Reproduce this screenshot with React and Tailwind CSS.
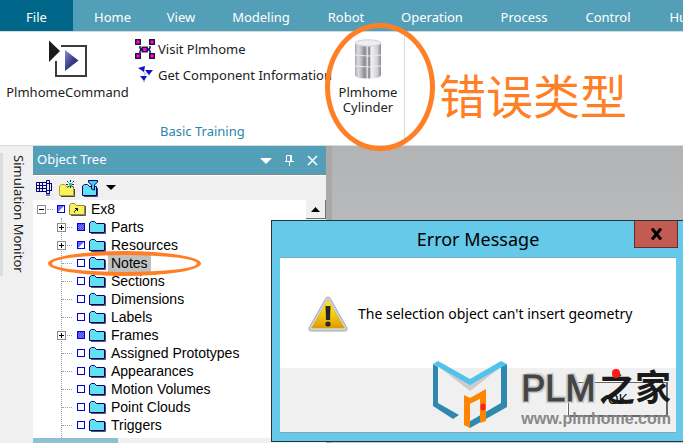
import React from 'react';

const tabs = [
  { name: 'Home', width: 'w-[79px]' },
  { name: 'View', width: 'w-[58px]' },
  { name: 'Modeling', width: 'w-[102px]' },
  { name: 'Robot', width: 'w-[68px]' },
  { name: 'Operation', width: 'w-[104px]' },
  { name: 'Process', width: 'w-[80px]' },
  { name: 'Control', width: 'w-[88px]' },
  { name: 'Human', width: 'w-[80px]' },
];

const nodes = [
  { name: 'Parts', expandable: true, state: 'full' },
  { name: 'Resources', expandable: true, state: 'partial' },
  { name: 'Notes', selected: true },
  { name: 'Sections' },
  { name: 'Dimensions' },
  { name: 'Labels' },
  { name: 'Frames', expandable: true, state: 'full' },
  { name: 'Assigned Prototypes' },
  { name: 'Appearances' },
  { name: 'Motion Volumes' },
  { name: 'Point Clouds' },
  { name: 'Triggers' },
];

const CommandIcon = () => (
  <svg width="40" height="38" viewBox="0 0 40 38" className="shrink-0">
    <defs>
      <linearGradient id="cmd" x1="0" y1="0" x2="1" y2="1">
        <stop offset="0" stopColor="#8d90c8" />
        <stop offset="0.5" stopColor="#3c3f8c" />
        <stop offset="1" stopColor="#14165f" />
      </linearGradient>
    </defs>
    <path d="M13 6H38V36H8V21" fill="none" stroke="#3c3c3c" strokeWidth="2" />
    <path d="M1 0.500L12 11L1 22Z" fill="#1c1a1a" />
    <path d="M17 10L30.500 20.500L17 31Z" fill="url(#cmd)" />
  </svg>
);

const NetworkIcon = () => (
  <svg width="20" height="20" viewBox="0 0 20 20" className="shrink-0">
    <path d="M5 7V9L7 10.500L5 12V14M15 7V9L13 10.500L15 12V14M5 10.500H15" fill="none" stroke="#10107c" strokeWidth="1.500" />
    <g fill="#f0f" stroke="#111" strokeWidth="1.300">
      <rect x="0.700" y="0.700" width="4.600" height="4.600" />
      <rect x="14.700" y="0.700" width="4.600" height="4.600" />
      <rect x="7.200" y="8.200" width="5" height="4.600" />
      <rect x="0.700" y="14.700" width="4.600" height="4.600" />
      <rect x="14.700" y="14.700" width="4.600" height="4.600" />
    </g>
  </svg>
);

const ComponentIcon = () => (
  <svg width="20" height="20" viewBox="0 0 20 20" className="shrink-0">
    <path d="M8 5L10 9L9 18M10 9L15 6L14 11" fill="none" stroke="#b9bccb" />
    <path d="M3 3L10 1L9 7Z" fill="#1212c8" />
    <path d="M10 5L18 5L14 10Z" fill="#1212c8" />
    <path d="M5 11L12 11L9 16Z" fill="#1212c8" />
  </svg>
);

const CylinderIcon = () => (
  <svg width="28" height="40" viewBox="0 0 28 40" className="shrink-0">
    <defs>
      <linearGradient id="cyl" x1="0" y1="0" x2="1" y2="0">
        <stop offset="0" stopColor="#a4a4ac" />
        <stop offset="0.120" stopColor="#dcdce2" />
        <stop offset="0.250" stopColor="#b9b9c2" />
        <stop offset="0.380" stopColor="#85858d" />
        <stop offset="0.480" stopColor="#dcdce0" />
        <stop offset="0.540" stopColor="#77777e" />
        <stop offset="0.620" stopColor="#f3f3f6" />
        <stop offset="0.850" stopColor="#d2d2d8" />
        <stop offset="1" stopColor="#8a8a92" />
      </linearGradient>
    </defs>
    <path d="M1 4V36Q1 39.500 14 39.500Q27 39.500 27 36V4Z" fill="url(#cyl)" />
    <path d="M1 16Q14 18 27 16M1 27Q14 29 27 27" fill="none" stroke="#ececf0" />
    <ellipse cx="14" cy="4" rx="13" ry="3.200" fill="#eeeff2" stroke="#d0d0d4" />
  </svg>
);

const FolderIcon = () => (
  <svg width="17" height="14" viewBox="0 0 17 14" className="shrink-0">
    <path d="M16.500 4V13.500H2" fill="none" stroke="#555" />
    <path d="M0.500 12.500V3L2.500 1.500H5.500L7.500 3.500H15.500V12.500Z" fill="#62e0f2" stroke="#00007c" />
  </svg>
);

const RootFolderIcon = () => (
  <svg width="17" height="14" viewBox="0 0 17 14" className="shrink-0">
    <path d="M16.500 4V13.500H2" fill="none" stroke="#555" />
    <path d="M0.500 12.500V3L2.500 1.500H5.500L7.500 3.500H15.500V12.500Z" fill="#f8f35c" stroke="#8f8b34" />
    <path d="M5.500 10.500V9.500L8 7M6 6.500H8.500V9" fill="none" stroke="#000" />
  </svg>
);

const StateIcon = ({ state }) => (
  <svg width="8" height="8" viewBox="0 0 8 8" className="shrink-0">
    <rect x="0.500" y="0.500" width="7" height="7" fill={state === 'full' ? '#7777ef' : '#fff'} stroke="#0000ec" />
    {state === 'partial' && <path d="M1 1H7L1 7Z" fill="#6464ec" />}
    {state === 'full' && <path d="M1 1L7 7M3 1L7 5M1 3L5 7M5 1L7 3M1 5L3 7" stroke="#1c1cd8" strokeDasharray="1 1" />}
  </svg>
);

const Expander = ({ open }) => (
  <svg width="9" height="9" viewBox="0 0 9 9" className="shrink-0">
    <rect x="0.500" y="0.500" width="8" height="8" fill="#fff" stroke="#8c8c8c" />
    <path d={open ? 'M2 4.500H7' : 'M2 4.500H7M4.500 2V7'} stroke="#000" />
  </svg>
);

const TableIcon = () => (
  <svg width="17" height="16" viewBox="0 0 17 16">
    <path d="M0.500 2.500H10.500V11.500H0.500ZM0.500 5.500H10.500M0.500 8.500H10.500M3.500 2.500V11.500M6.500 2.500V11.500M10.500 0.500H13.500V13.500H10.500ZM10.500 3.500H16M10.500 10.500H16M15.500 3V11" fill="none" stroke="#00007c" />
    <path d="M11 14V16M13 14V16" stroke="#00007c" />
  </svg>
);

const NewFolderIcon = () => (
  <svg width="17" height="17" viewBox="0 0 17 17">
    <path d="M15.500 9V16.500H2" fill="none" stroke="#444" />
    <path d="M0.500 15.500V6L2.500 4.500H5.500L7.500 6.500H14.500V15.500Z" fill="#f8f35c" stroke="#a9a23b" />
    <path d="M11.500 0V9M7 4.500H16M8 1L15 8M15 1L8 8" stroke="#222" strokeDasharray="2 1" />
    <rect x="10" y="3" width="3" height="3" fill="#0cc" />
  </svg>
);

const FilterFolderIcon = () => (
  <svg width="18" height="17" viewBox="0 0 18 17">
    <path d="M15.500 8V16.500H2" fill="none" stroke="#444" />
    <path d="M0.500 15.500V6L2.500 4.500H5.500L7.500 6.500H14.500V15.500Z" fill="#62e0f2" stroke="#00007c" />
    <path d="M6.500 0.500H15.500V2L12.500 5V10L9.500 9V5L6.500 2Z" fill="#42cdec" stroke="#00007c" />
  </svg>
);

const WarningIcon = () => (
  <svg width="40" height="36" viewBox="0 0 40 36" className="shrink-0">
    <defs>
      <linearGradient id="warn" x1="0" y1="0" x2="0" y2="1">
        <stop offset="0" stopColor="#fff200" />
        <stop offset="0.500" stopColor="#f5cf12" />
        <stop offset="1" stopColor="#dc9a05" />
      </linearGradient>
    </defs>
    <path d="M20 1Q21.500 1 22.500 3L39 32Q39.500 35 37 35H3Q0.500 35 1 32L17.500 3Q18.500 1 20 1Z" fill="#d4d5d9" stroke="#a5a6ab" />
    <path d="M20 4L36.500 32H3.500Z" fill="url(#warn)" stroke="#d6a40a" strokeWidth="0.500" />
    <path d="M17.500 10H22.500L22 24H18Z" fill="#25272d" />
    <circle cx="20" cy="28" r="2.600" fill="#25272d" />
  </svg>
);

const LogoMark = () => (
  <svg width="76" height="68" viewBox="0 0 76 68" className="shrink-0">
    <path d="M7 6L38 23L69 6L38 30Z" fill="#ccc" />
    <path d="M1 3L6 6V42L27 54L21 58L1 45Z" fill="#2f88ae" />
    <path d="M75 3L69 6V42L38 60V67L75 46Z" fill="#2f88ae" />
    <path d="M1 3L6 0L38 18L69 0L75 3L38 24Z" fill="#51c2ec" />
    <path fillRule="evenodd" d="M32 34L38 37L54 28V60L48 62V38L38 43V67L32 64Z" fill="#ff8500" />
    <path d="M38 43L48 38V54L38 60Z" fill="#efefef" />
    <ellipse cx="51" cy="46" rx="2.500" ry="3.500" fill="#f5202d" />
  </svg>
);

function Ribbon() {
  return (
    <section className="flex h-[115px] shrink-0 border-y border-[#d8dbdc] bg-white text-[13px] leading-[15px]">
      <button className="flex w-[135px] flex-col items-center justify-start pt-2">
        <CommandIcon />
        <span className="mt-[7px] block">PlmhomeCommand</span>
      </button>
      <div className="flex w-[197px] flex-col whitespace-nowrap">
        <button className="mt-[7px] flex items-center gap-[3px]"><NetworkIcon />Visit Plmhome</button>
        <button className="mt-[6px] flex items-center gap-[3px]"><ComponentIcon />Get Component Information</button>
        <h2 className="mt-auto mb-[6px] pl-[25px] text-[#2c85a8]">Basic Training</h2>
      </div>
      <button className="flex w-[73px] flex-col items-center justify-start border-r border-[#d8dbdc] pt-[7px]">
        <CylinderIcon />
        <span className="mt-[6px] block">Plmhome<br />Cylinder</span>
      </button>
      <p className="pt-[33px] pl-[34px] font-['Noto_Sans_CJK_SC',sans-serif] text-[47px] leading-[58px] text-[#ff7f27]">错误类型</p>
    </section>
  );
}

function ObjectTree() {
  return (
    <section className="flex w-[293px] shrink-0 flex-col bg-[#f0f0f0]">
      <header className="flex h-[29px] shrink-0 items-center border-b border-[#7f8a90] bg-[#549fb8] pr-2 pl-1 text-[13px] text-white">
        <h2 className="flex-1">Object Tree</h2>
        <button aria-label="Menu" className="mr-3">
          <svg width="12" height="12" viewBox="0 0 12 12"><path d="M0 4H12L6 10Z" fill="#fff" /></svg>
        </button>
        <button aria-label="Pin" className="mr-3">
          <svg width="11" height="12" viewBox="0 0 11 12"><path d="M2.500 7V1.500H7.500V7M1 7.500H10M5.500 8V12M6.500 1V7" fill="none" stroke="#fff" /></svg>
        </button>
        <button aria-label="Close">
          <svg width="11" height="11" viewBox="0 0 11 11"><path d="M1 1L10 10M10 1L1 10" stroke="#fff" strokeWidth="1.500" /></svg>
        </button>
      </header>
      <div className="flex h-[25px] shrink-0 items-center gap-[6px] border-t border-white pl-[3px]">
        <button aria-label="Columns"><TableIcon /></button>
        <button aria-label="New folder"><NewFolderIcon /></button>
        <button aria-label="Filter"><FilterFolderIcon /></button>
        <button aria-label="Filter options">
          <svg width="10" height="6" viewBox="0 0 10 6"><path d="M0 0H10L5 5Z" fill="#000" /></svg>
        </button>
      </div>
      <div className="flex min-h-0 flex-1 bg-white">
        <ul className="min-w-0 flex-1 overflow-hidden font-['Liberation_Sans',sans-serif] text-sm leading-[18px] text-black">
          <li>
            <div className="flex h-[18px] items-center pl-1">
              <Expander open />
              <span className="mr-1 ml-px w-[6px] border-t border-dotted border-gray-400"></span>
              <StateIcon state="partial" />
              <span className="ml-1"><RootFolderIcon /></span>
              <span className="pl-[5px]">Ex8</span>
            </div>
            <ul className="ml-7 border-l border-dotted border-gray-400 pb-2">
              {nodes.map((node) => (
                <li key={node.name} className="flex h-[18px] items-center">
                  {node.expandable ? (
                    <span className="-ml-[5px] flex w-[15px] items-center">
                      <Expander />
                      <span className="ml-px w-[5px] border-t border-dotted border-gray-400"></span>
                    </span>
                  ) : (
                    <span className="w-[10px] border-t border-dotted border-gray-400"></span>
                  )}
                  <span className="ml-[5px]"><StateIcon state={node.state} /></span>
                  <span className="ml-1"><FolderIcon /></span>
                  <span className={node.selected ? 'ml-[2px] bg-[#c0c0c0] px-[3px]' : 'ml-[2px] px-[3px]'}>{node.name}</span>
                </li>
              ))}
            </ul>
          </li>
        </ul>
        <div className="w-5 bg-[#f0f0f0]">
          <button aria-label="Scroll up" className="flex h-[19px] w-full items-center justify-center border-r border-b border-gray-500">
            <svg width="9" height="5" viewBox="0 0 9 5"><path d="M0 5H9L4.500 0Z" fill="#000" /></svg>
          </button>
        </div>
      </div>
      <div className="h-[5px] shrink-0"><div className="h-full w-[85px] bg-[#8ec0d3]"></div></div>
    </section>
  );
}

function ErrorDialog() {
  return (
    <div role="dialog" aria-labelledby="dialog-title" className="absolute top-[220px] right-0 bottom-[1px] left-[271px] flex flex-col border border-r-0 border-[#24343b] bg-[#66c9ea] pr-[7px] pb-2 pl-2 text-black">
      <header className="relative flex h-9 shrink-0 items-center justify-center">
        <h2 id="dialog-title" className="text-lg">Error Message</h2>
        <button aria-label="Close" className="absolute top-0 -right-[2px] flex h-[27px] w-11 items-center justify-center border border-t-0 border-[#5d2f2f] bg-[#c35b52]">
          <svg width="13" height="12" viewBox="0 0 13 12"><path d="M2 0.500L11 11.500M11 0.500L2 11.500" stroke="#000" strokeWidth="3" /></svg>
        </button>
      </header>
      <div className="flex min-h-0 flex-1 flex-col border-t border-[#74a9bf] bg-white">
        <div className="flex flex-1 items-center gap-[10px] pt-[2px] pl-7 text-sm">
          <WarningIcon />
          <p>The selection object can't insert geometry</p>
        </div>
        <div className="flex h-[65px] shrink-0 items-center justify-end border-b border-[#7fa9b8] bg-[#f0f0f0] pr-2 pb-[2px]">
          <button className="h-[35px] w-[100px] border border-r-2 border-b-2 border-[#666] text-sm shadow-[-1px_-1px_0_#fff]">OK</button>
        </div>
      </div>
    </div>
  );
}

function Watermark() {
  return (
    <div className="pointer-events-none absolute right-3 bottom-[14px] flex gap-[13px] font-['Liberation_Sans','Noto_Sans_CJK_SC',sans-serif]">
      <LogoMark />
      <div className="flex flex-col pt-2">
        <div className="flex h-10 items-center justify-between">
          <span className="text-4xl text-[#444] [-webkit-text-stroke:1px_#444] [text-shadow:-2px_-1px_1px_#c8c8c8,2px_2px_1px_#c8c8c8,-2px_2px_1px_#c8c8c8,2px_-2px_1px_#c8c8c8]">PLM</span>
          <span className="relative text-4xl font-bold text-[#1a1a1a]">
            之家
            <i className="absolute top-0 left-[13px] h-[9px] w-2 rounded-full bg-[#ff1a1a]"></i>
          </span>
        </div>
        <span className="text-base leading-5 font-bold text-[#888]">www.plmhome.com</span>
      </div>
    </div>
  );
}

function Highlights() {
  return (
    <>
      <div className="pointer-events-none absolute top-[23px] left-[325px] h-32 w-[110px] rounded-[50%] border-5 border-[#ff7f27]"></div>
      <div className="pointer-events-none absolute top-[251px] left-[48px] h-[25px] w-[153px] rounded-[50%] border-4 border-[#ff7f27]"></div>
    </>
  );
}

function App() {
  return (
    <main className="relative flex h-screen flex-col overflow-hidden bg-[#f0f0f0] font-['Noto_Sans',sans-serif] text-[#222]">
      <nav className="flex h-[31px] shrink-0 overflow-hidden bg-[#549fb8] text-[13px] leading-[34px] text-white">
        <a href="#file" className="w-[73px] shrink-0 bg-[#00678a] text-center">File</a>
        {tabs.map((tab) => (
          <a key={tab.name} href="#tab" className={`${tab.width} shrink-0 text-center`}>{tab.name}</a>
        ))}
      </nav>
      <Ribbon />
      <div className="flex min-h-0 flex-1">
        <aside className="flex w-[33px] shrink-0 justify-between">
          <div className="mt-[7px] h-[123px] w-[3px] bg-[#dcdcdc]"></div>
          <h2 className="mr-1 pt-[9px] text-[13px] leading-5 [writing-mode:vertical-rl]">Simulation Monitor</h2>
        </aside>
        <ObjectTree />
        <div className="w-[6px] shrink-0 bg-[#a9a9a9]"></div>
        <div className="flex-1 bg-linear-to-b from-[#b2b3b5] to-[#cccccd]"></div>
      </div>
      <ErrorDialog />
      <Watermark />
      <Highlights />
    </main>
  );
}

export default App;
